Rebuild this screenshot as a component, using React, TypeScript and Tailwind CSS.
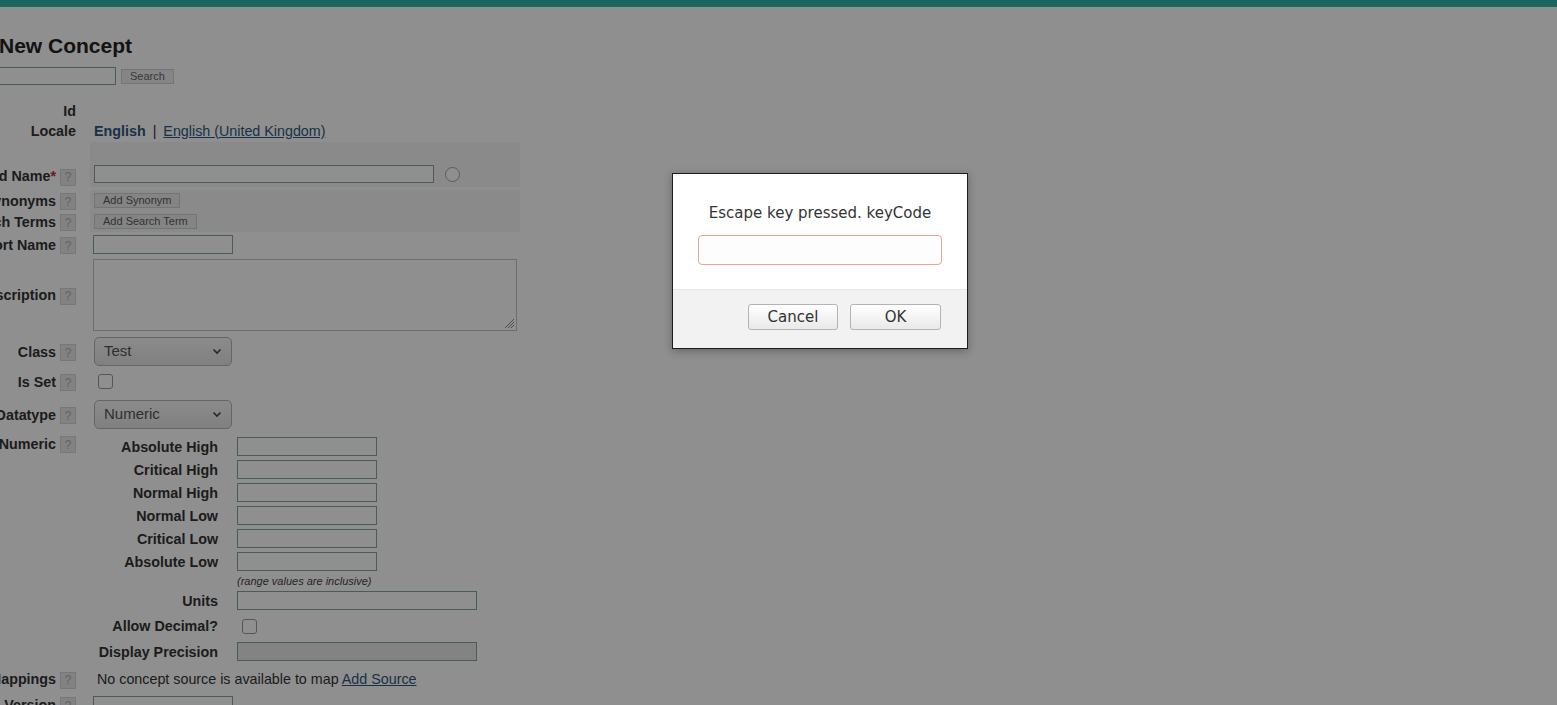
import React from "react";

const FORM_FONT = { fontFamily: '"Liberation Sans", Arial, sans-serif' };
const DIALOG_FONT = { fontFamily: '"DejaVu Sans", Verdana, sans-serif' };

function Help() {
  return (
    <span className="ml-[4px] inline-flex h-[17px] w-[16px] items-center justify-center border border-[#d4d4d4] bg-[#e8e8e8] text-[12px] font-normal text-[#b0b0b0]">
      ?
    </span>
  );
}

function Label({
  text,
  required,
  help = true,
  shift = "translate-y-[1px]",
}: {
  text: string;
  required?: boolean;
  help?: boolean;
  shift?: string;
}) {
  return (
    <div className={`flex w-[76px] shrink-0 justify-end whitespace-nowrap ${shift}`}>
      <span className="flex items-center text-[14.3px] font-bold text-[#333]">
        {text}
        {required && <span className="text-[#c62828]">*</span>}
        {help && <Help />}
      </span>
    </div>
  );
}

function SmallButton({ children }: { children: React.ReactNode }) {
  return (
    <span className="inline-flex h-[15px] items-center border border-[#cfcfcf] bg-[#ececec] px-[8px] text-[11px] leading-none text-[#5a5a5a]">
      {children}
    </span>
  );
}

function TextBox({ w, disabled }: { w: string; disabled?: boolean }) {
  return (
    <div
      className={`h-[19px] border border-[#86a39e] ${disabled ? "bg-[#eaeaea]" : "bg-white"} ${w}`}
    />
  );
}

function Select({ value }: { value: string }) {
  return (
    <div className="flex h-[29px] w-[138px] items-center justify-between rounded-[5px] border border-[#b4b4b4] bg-gradient-to-b from-[#f8f8f8] to-[#e4e4e4] pl-[9px] pr-[9px] text-[15px] text-[#555]">
      <span>{value}</span>
      <svg width="10" height="7" viewBox="0 0 10 7" fill="none">
        <path d="M1.5 1.5 5 5l3.5-3.5" stroke="#444" strokeWidth="1.6" />
      </svg>
    </div>
  );
}

function Checkbox() {
  return <div className="h-[15px] w-[15px] rounded-[3px] border border-[#9a9a9a] bg-white" />;
}

const NUMERIC_ROWS = [
  "Absolute High",
  "Critical High",
  "Normal High",
  "Normal Low",
  "Critical Low",
  "Absolute Low",
];

function SubLabel({ text }: { text: string }) {
  return (
    <div className="w-[124px] shrink-0 whitespace-nowrap text-right text-[14.3px] font-bold text-[#333]">
      {text}
    </div>
  );
}

export default function App() {
  return (
    <div className="relative h-[705px] w-full overflow-hidden bg-white" style={FORM_FONT}>
      <div className="h-[7px] w-full bg-[#33b4ac]" />

      <div className="mt-[26px] flex h-[26px] items-center -ml-[1px] text-[21px] font-bold text-[#222]">
        New Concept
      </div>

      <div className="mt-[8px] flex h-[18px] items-center">
        <div className="-ml-[10px] h-[18px] w-[126px] border border-[#86a39e] bg-white" />
        <span className="ml-[5px] inline-flex h-[15px] items-center border border-[#d0d0d0] bg-[#ededed] px-[8px] text-[11px] text-[#666]">
          Search
        </span>
      </div>

      <div className="mt-[15px] flex h-[20px] items-center">
        <Label text="Id" help={false} shift="translate-y-[2px]" />
      </div>

      <div className="flex h-[21px] items-center">
        <Label text="Locale" help={false} />
        <div className="ml-[18px] flex translate-y-[1px] items-center text-[14.3px]">
          <span className="font-bold text-[#2f5680]">English</span>
          <span className="mx-[7px] text-[#333]">|</span>
          <span className="text-[#2f5680] underline">English (United Kingdom)</span>
        </div>
      </div>

      <div className="mt-[1px] flex h-[45px] items-end">
        <div className="flex h-[26px] items-center">
          <Label text="Fully Specified Name" required shift="translate-y-[3px]" />
        </div>
        <div className="ml-[14px] flex h-[45px] w-[430px] items-end bg-[#f6f6f6] pb-[4px] pl-[4px]">
          <div className="h-[18px] w-[340px] border border-[#86a39e] bg-white" />
          <div className="mb-[1px] ml-[11px] h-[15px] w-[15px] rounded-full border border-[#a0a0a0] bg-white" />
        </div>
      </div>

      <div className="mt-[3px] flex">
        <div>
          <div className="flex h-[21px] items-center">
            <Label text="Synonyms" />
          </div>
          <div className="flex h-[21px] items-center">
            <Label text="Search Terms" />
          </div>
        </div>
        <div className="ml-[14px] w-[430px] bg-[#f6f6f6] pl-[4px]">
          <div className="flex h-[21px] items-center">
            <SmallButton>Add Synonym</SmallButton>
          </div>
          <div className="flex h-[21px] items-center">
            <SmallButton>Add Search Term</SmallButton>
          </div>
        </div>
      </div>

      <div className="mt-[3px] flex h-[19px] items-center">
        <Label text="Short Name" />
        <div className="ml-[17px]">
          <TextBox w="w-[140px]" />
        </div>
      </div>

      <div className="mt-[5px] flex h-[72px] items-center">
        <Label text="Description" />
        <div className="relative ml-[17px] h-[72px] w-[424px] border border-[#c4c4c4] bg-white">
          <svg className="absolute bottom-[1px] right-[1px]" width="12" height="12" viewBox="0 0 12 12">
            <path d="M11 2 2 11M11 5 5 11M11 8 8 11" stroke="#8a8a8a" strokeWidth="1" />
          </svg>
        </div>
      </div>

      <div className="mt-[6px] flex h-[29px] items-center">
        <Label text="Class" />
        <div className="ml-[18px]">
          <Select value="Test" />
        </div>
      </div>

      <div className="mt-[3px] flex h-[25px] items-center">
        <Label text="Is Set" />
        <div className="ml-[22px]">
          <Checkbox />
        </div>
      </div>

      <div className="mt-[6px] flex h-[29px] items-center">
        <Label text="Datatype" />
        <div className="ml-[18px]">
          <Select value="Numeric" />
        </div>
      </div>

      <div className="mt-[8px] flex items-start">
        <div className="-mt-[2px] flex h-[19px] items-center">
          <Label text="Numeric" shift="" />
        </div>
        <div className="ml-[18px]">
          {NUMERIC_ROWS.map((r) => (
            <div key={r} className="flex h-[23px] items-start">
              <div className="flex h-[19px] translate-y-[1px] items-center">
                <SubLabel text={r} />
              </div>
              <div className="ml-[19px]">
                <TextBox w="w-[140px]" />
              </div>
            </div>
          ))}
          <div className="flex h-[12px] items-center">
            <div className="w-[143px] shrink-0" />
            <span className="text-[11px] italic text-[#444]">(range values are inclusive)</span>
          </div>
          <div className="mt-[4px] flex h-[23px] items-start">
            <div className="flex h-[19px] translate-y-[1px] items-center">
              <SubLabel text="Units" />
            </div>
            <div className="ml-[19px]">
              <TextBox w="w-[240px]" />
            </div>
          </div>
          <div className="flex h-[24px] items-center">
            <div className="translate-y-[1px]">
              <SubLabel text="Allow Decimal?" />
            </div>
            <div className="ml-[24px]">
              <Checkbox />
            </div>
          </div>
          <div className="mt-[4px] flex h-[19px] items-center">
            <div className="translate-y-[1px]">
              <SubLabel text="Display Precision" />
            </div>
            <div className="ml-[19px]">
              <TextBox w="w-[240px]" disabled />
            </div>
          </div>
        </div>
      </div>

      <div className="mt-[8px] flex h-[22px] items-center">
        <Label text="Mappings" shift="" />
        <div className="ml-[21px] text-[14.3px] text-[#333]">
          No concept source is available to map{" "}
          <span className="text-[#2f5680] underline">Add Source</span>
        </div>
      </div>

      <div className="mt-[5px] flex h-[19px] items-center">
        <Label text="Version" shift="" />
        <div className="ml-[17px]">
          <TextBox w="w-[140px]" />
        </div>
      </div>

      <div className="absolute inset-0 bg-black/[0.44]" />

      <div
        className="absolute left-[672px] top-[173px] h-[176px] w-[296px] border border-[#1c1c1c] bg-white shadow-[0_2px_8px_rgba(0,0,0,0.3)]"
        style={DIALOG_FONT}
      >
        <div className="flex h-[115px] flex-col items-center pt-[29px]">
          <div className="h-[20px] text-[15px] leading-[20px] text-[#333]">
            Escape key pressed. keyCode
          </div>
          <div className="mt-[12px] h-[30px] w-[244px] rounded-[4px] border border-[#e8a592] bg-[#fdfdfd]" />
        </div>
        <div className="flex h-[59px] justify-end gap-[12px] border-t border-[#e6e6e6] bg-[#f2f2f2] pr-[26px] pt-[14px]">
          <div className="flex h-[26px] w-[90px] items-center justify-center rounded-[3px] border border-[#b3b3b3] bg-gradient-to-b from-white to-[#e9e9e9] text-[15px] text-[#333]">
            Cancel
          </div>
          <div className="flex h-[26px] w-[91px] items-center justify-center rounded-[3px] border border-[#b3b3b3] bg-gradient-to-b from-white to-[#e9e9e9] text-[15px] text-[#333]">
            OK
          </div>
        </div>
      </div>
    </div>
  );
}
